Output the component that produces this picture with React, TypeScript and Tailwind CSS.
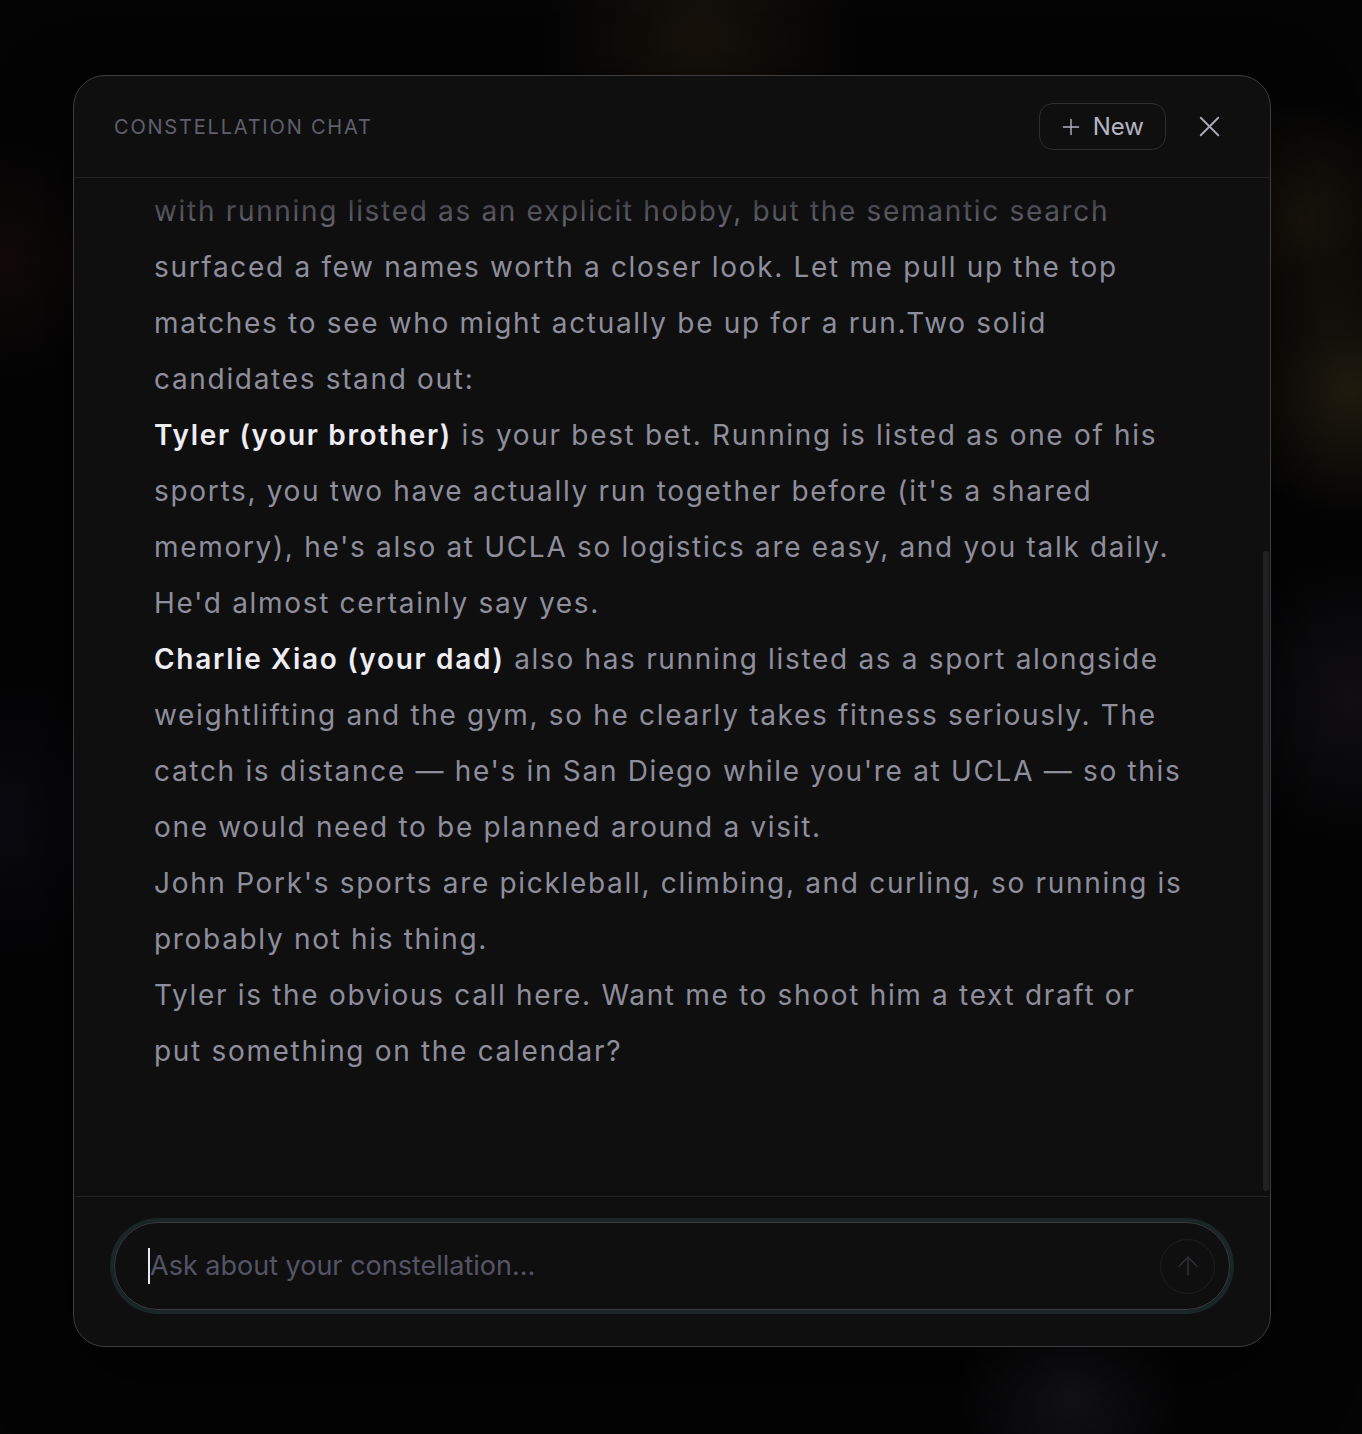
import React from 'react'
import { Plus, X, ArrowUp } from 'lucide-react'

const font = { fontFamily: 'Inter, "Noto Sans", sans-serif' }

export default function App() {
  return (
    <div
      className="relative h-[1434px] w-full overflow-hidden bg-[#040405] bg-[radial-gradient(circle_at_700px_40px,rgba(120,90,40,0.16),transparent_160px),radial-gradient(circle_at_1300px_220px,rgba(120,100,40,0.18),transparent_120px),radial-gradient(circle_at_1350px_390px,rgba(130,110,50,0.22),transparent_130px),radial-gradient(circle_at_1350px_700px,rgba(70,60,70,0.2),transparent_140px),radial-gradient(circle_at_0px_260px,rgba(80,40,30,0.18),transparent_120px),radial-gradient(circle_at_0px_820px,rgba(40,40,70,0.18),transparent_140px),radial-gradient(circle_at_1070px_1390px,rgba(60,60,70,0.3),transparent_110px)]"
      style={font}
    >
      <div className="ml-[73px] pt-[75px]">
        <div className="flex h-[1272px] w-[1198px] flex-col overflow-hidden rounded-[32px] border border-[#3d3d3f] bg-[#0f0f10] shadow-[0_30px_80px_rgba(0,0,0,0.6)]">
          {/* header */}
          <div className="flex h-[102px] shrink-0 items-center justify-between border-b border-[#222224] pl-10 pr-[42px]">
            <span className="text-[20px] tracking-[0.09em] text-[#5f5f6e]">CONSTELLATION CHAT</span>
            <div className="flex items-center gap-6">
              <button
                type="button"
                className="flex h-[47px] items-center gap-[9px] rounded-[14px] border border-[#2f2f33] pl-[18px] pr-[21px] text-[24px] text-[#b4b4c0]"
              >
                <Plus size={26} strokeWidth={1.3} />
                <span>New</span>
              </button>
              <button type="button" className="flex h-10 w-[38px] items-center justify-center text-[#a9a9b5]">
                <X size={35} strokeWidth={1.3} />
              </button>
            </div>
          </div>

          {/* messages */}
          <div className="relative flex-1 overflow-hidden">
            <div className="pl-[80px] pr-[82px] pt-[5px] text-[28px] leading-[56px] tracking-[0.06em] text-[#8e8e9c]">
              <p>
                with running listed as an explicit hobby, but the semantic search surfaced a few names worth a
                closer look. Let me pull up the top matches to see who might actually be up for a run.Two solid
                candidates stand out:
              </p>
              <p>
                <strong className="font-semibold tracking-[0.06em] text-[#ededf2]">Tyler (your brother)</strong> is
                your best bet. Running is listed as one of his sports, you two have actually run together before (it's
                a shared memory), he's also at UCLA so logistics are easy, and you talk daily. He'd almost certainly
                say yes.
              </p>
              <p>
                <strong className="font-semibold tracking-[0.06em] text-[#ededf2]">Charlie Xiao (your dad)</strong>{' '}
                also has running listed as a sport alongside weightlifting and the gym, so he clearly takes fitness
                seriously. The catch is distance — he's in San Diego while you're at UCLA — so this one would need to
                be planned around a visit.
              </p>
              <p>
                John Pork's sports are pickleball, climbing, and curling, so running is probably not his thing.
              </p>
              <p>
                Tyler is the obvious call here. Want me to shoot him a text draft or put something on the calendar?
              </p>
            </div>
            <div className="pointer-events-none absolute left-0 right-0 top-0 h-[72px] bg-gradient-to-b from-[#0f0f10]/90 to-transparent" />
            <div className="absolute right-[1px] top-[373px] h-[640px] w-[6px] rounded-full bg-[#212123]" />
          </div>

          {/* composer */}
          <div className="shrink-0 border-t border-[#222224] px-10 pb-[36px] pt-[25px]">
            <div className="flex h-[88px] items-center rounded-full border border-[#3c3c3e] pl-[33px] pr-[14px] shadow-[0_0_0_4px_#1a2526]">
              <div className="flex flex-1 items-center">
                <span className="h-[36px] w-[2px] bg-[#e8e8ee]" />
                <span className="text-[27px] text-[#545466]">Ask about your constellation…</span>
              </div>
              <button
                type="button"
                className="flex h-[55px] w-[55px] items-center justify-center rounded-full border border-[#1f1f22] text-[#2f2f33]"
              >
                <ArrowUp size={30} strokeWidth={1.3} />
              </button>
            </div>
          </div>
        </div>
      </div>
    </div>
  )
}
